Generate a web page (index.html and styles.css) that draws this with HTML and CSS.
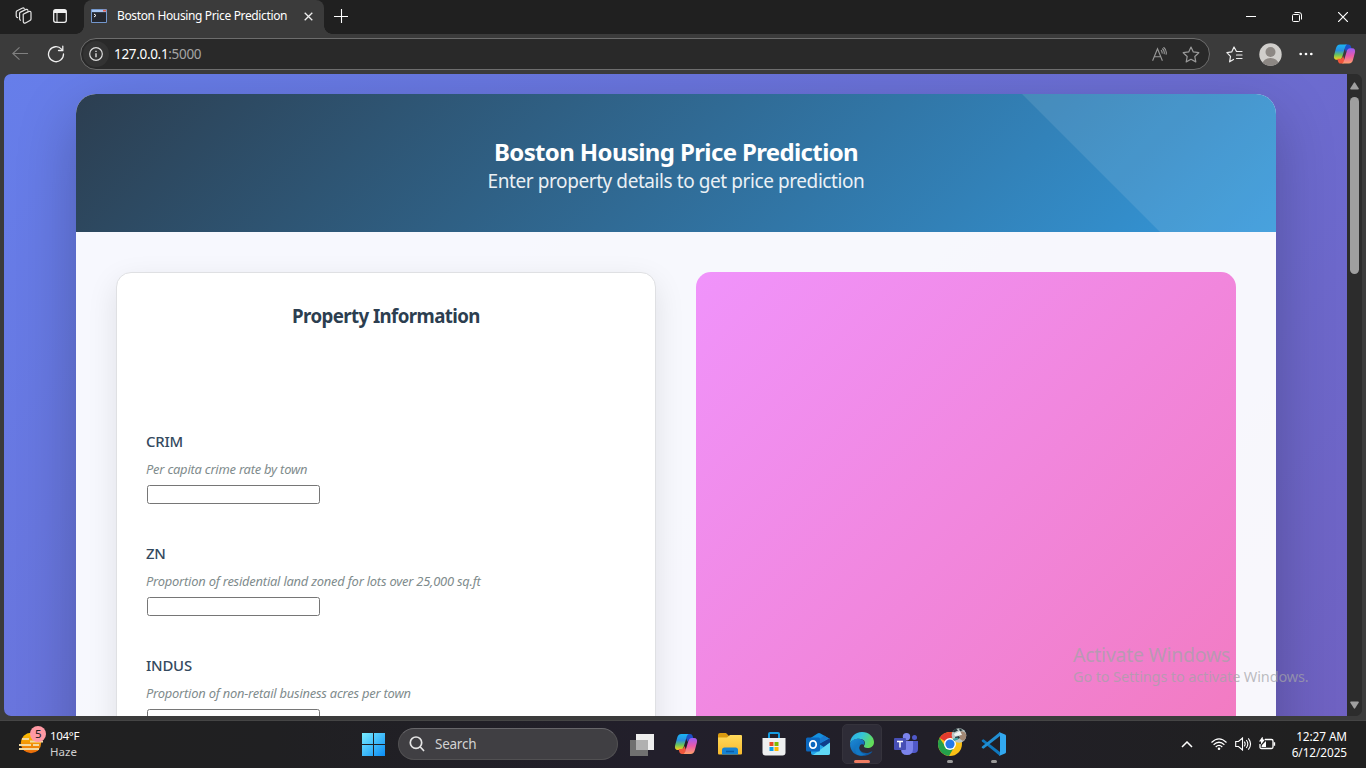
FILE: index.html
```html
<!DOCTYPE html>
<html lang="en">
<head>
<meta charset="utf-8">
<title>Boston Housing Price Prediction</title>
<link rel="stylesheet" href="styles.css">
</head>
<body>
<svg class="defs" width="0" height="0" aria-hidden="true">
  <defs>
    <linearGradient id="cpA" x1="0" y1="0" x2="0" y2="1"><stop offset="0" stop-color="#18b5f5"/><stop offset=".4" stop-color="#2b8fe0"/><stop offset=".68" stop-color="#6ac45a"/><stop offset="1" stop-color="#ffd21c"/></linearGradient>
    <linearGradient id="cpB" x1="0" y1="0" x2="0" y2="1"><stop offset="0" stop-color="#9a5cf5"/><stop offset=".5" stop-color="#ea5aa8"/><stop offset="1" stop-color="#ffa06a"/></linearGradient>
    <linearGradient id="win" gradientUnits="userSpaceOnUse" x1="0" y1="0" x2="24" y2="24"><stop offset="0" stop-color="#7df0ff"/><stop offset="1" stop-color="#0a8cf5"/></linearGradient>
    <linearGradient id="sun" x1="0" y1="0" x2="0" y2="1"><stop offset="0" stop-color="#ffc400"/><stop offset="1" stop-color="#e8690b"/></linearGradient>
    <linearGradient id="edgeA" x1="0" y1="0" x2="1" y2=".4"><stop offset="0" stop-color="#2aa7e8"/><stop offset=".5" stop-color="#35c6d8"/><stop offset="1" stop-color="#62dc5a"/></linearGradient>
    <linearGradient id="edgeB" x1="0" y1="0" x2="1" y2="1"><stop offset="0" stop-color="#1b8bd8"/><stop offset="1" stop-color="#0b4f98"/></linearGradient>
    <linearGradient id="folder" x1="0" y1="0" x2="0" y2="1"><stop offset="0" stop-color="#ffda5c"/><stop offset="1" stop-color="#f7b92d"/></linearGradient>
    <symbol id="copilot" viewBox="0 0 24 24">
      <path fill="#1c50c8" d="M13 2h3c1.500 0 2.300.9 2.700 2.200L19.500 7H17c-2 0-2.900 1-3.500 3L12 6z"/>
      <path fill="url(#cpA)" d="M7.500 2H15c-1.300.3-1.900 1.300-2.300 2.800l-2.800 9.400C9.300 16.600 8.300 18 6 18H4c-2.700 0-3.500-2-2.900-4.500l2-7.500C3.800 3.400 5 2 7.500 2z"/>
      <path fill="#f0563c" d="M11 22H8c-1.500 0-2.300-.9-2.700-2.200L4.500 17H7c2 0 2.900-1 3.500-3l1.500 4z"/>
      <path fill="url(#cpB)" d="M16.500 22H9c1.300-.3 1.900-1.300 2.300-2.800l2.800-9.400C14.700 7.400 15.700 6 18 6h2c2.700 0 3.500 2 2.900 4.500l-2 7.500c-.7 2.600-1.900 4-4.400 4z"/>
    </symbol>
  </defs>
</svg>
<div class="screen">
  <div class="tabbar">
    <svg class="ws" width="20" height="20" viewBox="0 0 20 20" fill="none" stroke="#e6e6e6" stroke-width="1.200" stroke-linejoin="round" stroke-linecap="round"><path d="M9.200 8.200 15 5.500q2-.6 2 1.200v6.200q0 1-1 1.500l-4.500 2.500q-2 .8-2.200-1.200zM9.200 8.200l5-2.700M6.500 14.200q-.9-.3-.9-1.500V7.600q0-1 .9-1.500l5.500-2.700q1.300-.5 1.900.8M3.600 11.700q-1.400-.3-1.400-1.700V6.300q0-1 .9-1.500l5-2.600q1.600-.6 2.100.4"/></svg>
    <svg class="tabs" width="16" height="16" viewBox="0 0 16 16" fill="none" stroke="#f0f0f0" stroke-width="1.300"><rect x="1.700" y="1.700" width="12.600" height="12.600" rx="2"/><path d="M2 3.500h12" stroke-width="3"/><path d="M5 5v9" stroke-width="1"/></svg>
    <div class="tab">
      <svg width="16" height="14" viewBox="0 0 16 14"><rect width="16" height="14" rx="1" fill="#7397cd"/><path fill="#a9c6f0" d="M1 1h14v2H1z"/><path fill="#e45a4a" d="M12 .8h3v1.600h-3z"/><path fill="#24272e" d="M1 3.200h14V13H1z"/><path d="m3 5 2 1.500L3 8" fill="none" stroke="#fff"/></svg>
      <span class="tab-title">Boston Housing Price Prediction</span>
      <svg class="close" width="9" height="9" viewBox="0 0 9 9" stroke="#eee" stroke-width="1.300"><path d="m.7.7 7.600 7.600M8.300.7.700 8.300"/></svg>
    </div>
    <svg class="plus" width="14" height="14" viewBox="0 0 14 14" stroke="#fff" stroke-width="1.100"><path d="M7.500 0v14M0 7.500h14"/></svg>
    <div class="winctl">
      <svg width="10" height="10" viewBox="0 0 10 10" stroke="#fff"><path d="M0 4.500h10"/></svg>
      <svg width="10" height="10" viewBox="0 0 10 10" fill="none" stroke="#fff"><rect x=".5" y="2.500" width="7" height="7" rx="1"/><path d="M2.500.5H7q2.500 0 2.500 2.500v4.500"/></svg>
      <svg width="10" height="10" viewBox="0 0 10 10" stroke="#fff" stroke-width="1.200"><path d="m0 0 10 10M10 0 0 10"/></svg>
    </div>
  </div>

  <div class="toolbar">
    <svg class="back" width="16" height="14" viewBox="0 0 16 14" fill="none" stroke="#808080" stroke-width="1.100"><path d="M16 6.500H.8M7.500.400.800 6.500l6.700 6.100"/></svg>
    <svg class="reload" width="18" height="18" viewBox="0 0 18 18" fill="none" stroke="#eee" stroke-width="1.300" stroke-linecap="round"><path d="M14.500 4.100A7.500 7.500 0 1 0 16.500 9M15.800 1.200v4.300h-4.300"/></svg>
    <div class="address">
      <span class="info"><svg width="14" height="14" viewBox="0 0 14 14" fill="none" stroke="#ddd" stroke-width="1.200"><circle cx="7" cy="7" r="6.300"/><path d="M7 6.300v4M7 3.700v1.300" stroke-width="1.400"/></svg></span>
      <span class="url">127.0.0.1<span class="port">:5000</span></span>
      <svg class="read" width="16" height="15" viewBox="0 0 16 15" fill="none" stroke="#999" stroke-width="1.100"><path d="M.6 13.800 5.500 1.800l4.900 12M2.200 9.700h6.600M9 3.100q1.500 1.400 1 3.400M10.300 1.500q2.600 2.200 1.800 5.600M11.500.2q3.800 2.900 2.500 7.500"/></svg>
      <svg class="star" width="18" height="17" viewBox="0 0 18 17" fill="none" stroke="#999" stroke-width="1.200" stroke-linejoin="round"><path d="m9 1 2.300 4.900 5.500.8-4 3.800 1 5.400L9 13.300l-4.800 2.600 1-5.400-4-3.800 5.500-.8z"/></svg>
    </div>
    <svg class="favs" width="17" height="17" viewBox="0 0 17 17" fill="none" stroke="#eee" stroke-width="1.200" stroke-linejoin="round" stroke-linecap="round"><path d="M16 5.500h-5.500L8 1 5.700 5.900.9 6.600l3.600 3.800-.9 5.400L7.500 13.500M10.500 9H16M10.500 12.500H16"/></svg>
    <svg class="avatar" width="23" height="23" viewBox="0 0 23 23"><defs><clipPath id="av"><circle cx="11.500" cy="11.500" r="11.200"/></clipPath></defs><g clip-path="url(#av)"><path fill="#d0cecb" d="M0 0h23v23H0z"/><circle cx="11.500" cy="9" r="5" fill="#8c8783"/><ellipse cx="11.500" cy="21" rx="8" ry="6" fill="#8c8783"/></g></svg>
    <svg class="dots" width="14" height="4" viewBox="0 0 14 4" fill="#fff"><circle cx="1.700" cy="2" r="1.350"/><circle cx="7" cy="2" r="1.350"/><circle cx="12.300" cy="2" r="1.350"/></svg>
    <svg class="cop" width="23" height="24"><use href="#copilot" width="23" height="24"/></svg>
  </div>

  <div class="viewport">
    <div class="page">
      <div class="container">
        <div class="header">
          <h1>Boston Housing Price Prediction</h1>
          <p>Enter property details to get price prediction</p>
        </div>
        <div class="columns">
          <div class="card">
            <h2>Property Information</h2>
            <div class="field"><label class="name">CRIM</label><span class="hint">Per capita crime rate by town</span><input class="box"></div>
            <div class="field"><label class="name">ZN</label><span class="hint">Proportion of residential land zoned for lots over 25,000 sq.ft</span><input class="box"></div>
            <div class="field"><label class="name">INDUS</label><span class="hint">Proportion of non-retail business acres per town</span><input class="box"></div>
          </div>
          <div class="result"></div>
        </div>
      </div>
    </div>
    <div class="scrollbar">
      <svg width="9" height="8" viewBox="0 0 9 8" fill="#9f9f9f"><path d="M3.700.9q.8-1.200 1.600 0l3.500 5.500Q9 7.500 8 7.500H1Q0 7.500.2 6.400z"/></svg>
      <div class="thumb"></div>
      <svg class="down" width="9" height="8" viewBox="0 0 9 8" fill="#9f9f9f"><path d="M3.700 7.100q.8 1.200 1.600 0l3.500-5.500Q9 .5 8 .5H1Q0 .5.200 1.600z"/></svg>
    </div>
  </div>

  <div class="taskbar">
    <div class="weather">
      <svg width="28" height="28" viewBox="0 0 28 28"><circle cx="13" cy="17" r="10.200" fill="url(#sun)"/><path d="M4 13h7M12 15.500h13M1 19h12M15 19h6M1 23h20" stroke="#f3d9a0" stroke-width="2"/><circle cx="20" cy="8" r="8" fill="#ff99a4"/><text x="20.300" y="12.200" text-anchor="middle" class="badge">5</text></svg>
      <div class="wtext"><span class="temp">104°F</span><span class="haze">Haze</span></div>
    </div>
    <div class="apps">
      <div class="app"><svg width="24" height="24" viewBox="0 0 24 24" fill="url(#win)"><path d="M1 1h11v11H1zM13 1h11v11H13zM1 13h11v11H1zM13 13h11v11H13z"/></svg></div>
      <div class="search"><svg width="16" height="16" viewBox="0 0 16 16" fill="none" stroke="#e4e4e4" stroke-width="1.700" stroke-linecap="round"><circle cx="7" cy="6.700" r="5.700"/><path d="m11.300 11 3.300 3.500"/></svg><span>Search</span></div>
      <div class="app tv"><svg width="26" height="24" viewBox="0 0 26 24"><path fill="#eee" d="M7 2h18v16H7z"/><path fill="#707070" d="M1 8h18v16H1z"/><path fill="#b0b0b0" d="M7 8h12v10H7z"/></svg></div>
      <div class="app"><svg width="24" height="24"><use href="#copilot" width="24" height="24"/></svg></div>
      <div class="app"><svg width="26" height="24" viewBox="0 0 26 24"><path fill="#d99a10" d="M1 3q0-2 2-2h6l3 3v5H1z"/><path fill="url(#folder)" d="M1 5.500h9L13 3h11q1 0 1 1v17.500q0 1-1 1H2q-1 0-1-1z"/><path fill="#1683d3" d="M5 22.500V18q0-2.500 2.500-2.500h11Q21 15.500 21 18v4.500z"/><path stroke="#0a5ba5" stroke-width="1.500" d="M9 19.500h8"/></svg></div>
      <div class="app"><svg width="24" height="24" viewBox="0 0 24 24"><path d="M7 7V2q0-1 1-1h8q1 0 1 1v5" fill="none" stroke="#159be0" stroke-width="2"/><path fill="#eeeff0" d="M.5 6h23v14.500q0 3-3 3h-17q-3 0-3-3z"/><path fill="#e84a25" d="M7.500 10h4v4h-4z"/><path fill="#7fba00" d="M12.500 10h4v4h-4z"/><path fill="#0a9fe9" d="M7.500 15h4v4h-4z"/><path fill="#fbb900" d="M12.500 15h4v4h-4z"/></svg></div>
      <div class="app"><svg width="26" height="24" viewBox="0 0 26 24"><path fill="#1490df" d="M4 7 12.500 1.500q1.500-.9 3 0L25 7v5H4z"/><path fill="#0f3f8c" d="M14 12 25 6v6l-6 4z"/><path fill="#1a79d0" d="M6 6l8 6 9-6-4-2.500L12 9z"/><path fill="#22a5ea" d="M6 12h8l5 3 6-4v10q0 2-2 2H8q-2 0-2-2z"/><path fill="#5fd8f5" d="M8 23 25 10.500V21q0 2-2 2z"/><rect x="1" y="5.500" width="14" height="14" rx="1.500" fill="#0b67be"/><ellipse cx="8" cy="12.500" rx="3.200" ry="3.600" fill="none" stroke="#fff" stroke-width="1.800"/></svg></div>
      <div class="app active"><svg width="26" height="26" viewBox="0 0 26 26"><path fill="url(#edgeA)" d="M1 13C1 6 6 1 13 1s12 5 12 10c0 4-3 6-6.500 6-3 0-4-1-3.500-2.200 2.800-3.700-.5-7-5-7C6 7.800 2 10 1 13z"/><path fill="url(#edgeB)" d="M1 13c1-3.500 4.500-5.200 8.500-5.200 4.300 0 7 2.900 5.700 6.200-1.200-1.400-3.700-1-4.700 1.100-1.500 3.600 2.300 7.300 7 7 2 0 3.700-.8 5-1.600.6-.3 1 .1.600.6C21 24 17.500 25 13 25 6 25 1 20 1 13z"/><path fill="#1278c4" d="M10.500 15c-2 4.800 2.700 9 7 7.500-3 2.500-11 3.500-11.300-3.500-.1-3 2-5.700 4-7.300z"/></svg></div>
      <div class="app"><svg width="26" height="24" viewBox="0 0 26 24"><circle cx="13.500" cy="4.800" r="3.700" fill="#7b83eb"/><circle cx="21.500" cy="5.500" r="2.500" fill="#5059c9"/><path fill="#5059c9" d="M17 9h8v8q0 4-4 4h-4z"/><path fill="#7b83eb" d="M8 9h12v8q0 6-6 6t-6-6z"/><rect x="1" y="6" width="12" height="12" rx="1" fill="#474fb5"/><path fill="none" stroke="#fff" stroke-width="1.500" d="M4 9.500h6M7 9.500v6"/></svg></div>
      <div class="app run chrome"><svg width="30" height="30" viewBox="0 0 30 30"><circle cx="13" cy="17" r="12" fill="#fbc116"/><path fill="#e33b2e" d="M2.600 11A12 12 0 0 1 23.400 11H13v6z"/><path fill="#23a04b" d="M2.600 11A12 12 0 0 0 12 29l5.500-9.500L8 19z"/><circle cx="13" cy="17" r="6" fill="#fff"/><circle cx="13" cy="17" r="4.600" fill="#2678e8"/><circle cx="22" cy="8.500" r="7.300" fill="#b9c6c5"/><path fill="#a18673" d="M22 5q5-2 7 2 1 5-3 7l-3-2z"/><path fill="#26363a" d="m15.500 4 3.500-2.500 2 2-4 2zM22 1.500l4 1.500-3 1.500zM18 10l4-1 1 2-4 2z"/><path fill="#eef3f1" d="m17 7 6-3 2 4-7 1z"/><path fill="#3aa3a5" d="m15.500 12 5-1.500 1 1.500-4 2z"/></svg></div>
      <div class="app run vs"><svg width="26" height="26" viewBox="0 0 26 26"><path fill="#0f78be" d="M2.500 8.300 19 21v4L1 10.500q-.7-.7 0-1.400z"/><path fill="#218fd3" d="M2.500 17.700 19 5V1L1 15.500q-.7.700 0 1.400z"/><path fill="#32a8ef" d="m18 1 6 2.500q1 .4 1 1.500v16q0 1-1 1.500L18 25q1-.4 1-2V3q0-1.600-1-2z"/></svg></div>
    </div>
    <div class="tray">
      <svg class="chev" width="12" height="7" viewBox="0 0 12 7" fill="none" stroke="#fff" stroke-width="1.500"><path d="m1 6 5-5 5 5"/></svg>
      <svg class="wifi" width="16" height="13" viewBox="0 0 16 13" fill="none" stroke="#fff" stroke-width="1.200"><path d="M.5 4.500q7.500-7.200 15 0M2.600 6.800q5.400-5.100 10.800 0M4.700 9q3.300-3.100 6.600 0"/><circle cx="8" cy="10.800" r="1.300" fill="#fff" stroke="none"/></svg>
      <svg class="vol" width="17" height="14" viewBox="0 0 17 14" fill="none" stroke="#fff" stroke-width="1.100"><path d="M.7 4.500h2.800L7.500 1v12L3.500 9.500H.7zM9.300 4.700q1.700 2.300 0 4.600M11.300 3q3 4 0 8M13.300 1.300q4.500 5.700 0 11.400"/></svg>
      <svg class="bat" width="17" height="14" viewBox="0 0 17 14"><path d="M6 2.500h6.500q1.500 0 1.500 1.500v6q0 1.500-1.500 1.500h-10Q1 11.500 1 10V7M15.500 5.300v3.400" fill="none" stroke="#fff" stroke-width="1.300"/><path fill="#fff" d="M3.500-.5 0 4.500h2v3l4-5H4zM2.500 10l.5-2 4-4v6z"/></svg>
      <div class="clock"><span class="time">12:27 AM</span><span class="date">6/12/2025</span></div>
    </div>
  </div>

  <div class="watermark"><div class="wm1">Activate Windows</div><div class="wm2">Go to Settings to activate Windows.</div></div>
</div>
</body>
</html>
```

FILE: styles.css
```css
* { box-sizing: border-box; margin: 0; padding: 0; }
body { width: 1366px; height: 768px; overflow: hidden; font-family: "Noto Sans", "Open Sans", sans-serif; }
svg { display: block; flex: none; }
.defs { position: absolute; }
.screen { position: relative; width: 1366px; height: 768px; display: flex; flex-direction: column; background: #3b3b3b; overflow: hidden; white-space: nowrap; }

/* tab strip */
.tabbar { height: 34px; background: #202020; display: flex; align-items: center; flex: none; }
.ws { margin-left: 14px; margin-top: -3px; }
.tabs { margin-left: 18px; margin-top: -2px; }
.tab { position: relative; width: 240px; height: 34px; margin-left: 16px; padding: 0 10px 2px 7px; background: #3b3b3b; border-radius: 8px 8px 0 0; display: flex; align-items: center; }
.tab::before, .tab::after { content: ""; position: absolute; bottom: 0; width: 8px; height: 8px; }
.tab::before { left: -8px; background: radial-gradient(circle at 0 0, #202020 7.500px, #3b3b3b 8px); }
.tab::after { right: -8px; background: radial-gradient(circle at 100% 0, #202020 7.500px, #3b3b3b 8px); }
.tab-title { width: 178px; margin-left: 10px; padding-bottom: 1px; font-size: 12px; letter-spacing: -.36px; color: #fff; }
.close { margin-left: 9px; }
.plus { margin-left: 10px; margin-top: -3px; }
.winctl { margin-left: auto; display: flex; gap: 36px; padding-right: 18px; }

/* toolbar */
.toolbar { height: 40px; display: flex; align-items: center; flex: none; background: #3b3b3b; }
.back { margin-left: 12px; }
.reload { margin-left: 19px; }
.address { width: 1130px; height: 32px; margin-left: 15px; padding: 0 9px 0 2px; border: 1px solid #6d6d6d; border-radius: 16px; background: #292929; display: flex; align-items: center; }
.info { width: 26px; height: 26px; border-radius: 50%; background: #333; display: flex; align-items: center; justify-content: center; }
.url { margin-left: 5px; font-size: 13.500px; letter-spacing: -.32px; color: #fff; }
.port { color: #a5a5a5; }
.read { margin-left: auto; }
.star { margin-left: 14px; }
.favs { margin-left: 16px; }
.avatar { margin-left: 16px; }
.dots { margin-left: 17px; }
.cop { margin-left: 20px; }

/* page viewport */
.viewport { height: 642px; margin: 0 4px; border-radius: 7px; overflow: hidden; display: flex; flex: none; background: #2c2c2c; }
.page { width: 1343px; height: 2200px; padding: 20px 71px 20px 72px; background: linear-gradient(135deg, #667eea 0%, #764ba2 100%); flex: none; }
.container { width: 1200px; height: 2160px; border-radius: 20px; overflow: hidden; background: rgba(255,255,255,.95); box-shadow: 0 20px 60px rgba(0,0,0,.24); }
.header { position: relative; height: 138px; padding-top: 40px; background: linear-gradient(135deg, #2c3e50, #3498db); text-align: center; color: #fff; }
.header::after { content: ""; position: absolute; inset: 0; background: rgba(255,255,255,.1); clip-path: polygon(946px 0, 100% 0, 100% 100%, 1084px 100%); }
.header h1 { font-size: 24px; line-height: 35px; font-weight: 700; letter-spacing: -.63px; }
.header p { font-size: 19px; line-height: 24px; letter-spacing: -.42px; opacity: .9; }
.columns { display: grid; grid-template-columns: 1fr 1fr; gap: 40px; padding: 40px; height: 2022px; }
.card { padding: 28px 29px; border: 1px solid #dfe0e3; border-radius: 15px; background: #fff; box-shadow: 0 10px 30px rgba(0,0,0,.1); }
.card h2 { height: 131px; font-size: 18.700px; line-height: 30px; font-weight: 700; letter-spacing: -.6px; color: #2c3e50; text-align: center; }
.field { height: 112px; display: flex; flex-direction: column; align-items: flex-start; }
.name { height: 27px; line-height: 19px; font-size: 14.900px; font-weight: 500; letter-spacing: -.2px; color: #34495e; }
.hint { height: 26px; line-height: 20px; font-size: 12.900px; font-style: italic; letter-spacing: -.21px; color: #7f8c8d; }
.box { width: 173px; height: 19px; margin-left: 1px; border: 1px solid #767676; border-radius: 2.500px; background: #fff; }
.result { border-radius: 15px; background: linear-gradient(135deg, #f093fb 0%, #f5576c 100%); }
.scrollbar { width: 15px; display: flex; flex-direction: column; align-items: center; padding: 8px 0 7px; background: #2c2c2c; }
.thumb { width: 9px; height: 177px; margin-top: 7px; border-radius: 5px; background: #9f9f9f; }
.down { margin-top: auto; }

/* taskbar */
.taskbar { height: 48px; margin-top: 4px; border-top: 1px solid #454545; background: linear-gradient(90deg, #202020 0, #202022 20%, #221f2b 48%, #211f28 68%, #202020 95%); display: flex; flex: none; color: #fff; }
.weather { width: 351px; display: flex; padding: 5px 0 0 18px; }
.badge { font-size: 11.500px; fill: #202020; }
.wtext { margin-left: 4px; display: flex; flex-direction: column; font-size: 11.500px; line-height: 16px; letter-spacing: -.3px; padding-top: 2px; }
.haze { color: #cfcfcf; letter-spacing: 0; }
.apps { display: flex; align-items: center; height: 46px; }
.app { position: relative; width: 44px; height: 40px; display: flex; align-items: center; justify-content: center; }
.search { width: 220px; height: 32px; margin: 0 2px 0 3px; padding-left: 10px; border: 1px solid #515052; border-top-color: #67666a; border-radius: 16px; background: #403f43; display: flex; align-items: center; gap: 10px; font-size: 13.500px; letter-spacing: -.25px; color: #d2d2d2; }
.active { width: 40px; margin: 0 2px; border: 1px solid #35333c; border-radius: 5px; background: #2e2c37; }
.active::after, .run::after { content: ""; position: absolute; bottom: 1px; width: 6px; height: 3px; border-radius: 2px; background: #9a9a9a; }
.active::after { width: 16px; bottom: 0; background: #ee7c62; }
.chrome svg { margin: -5px 0 0 4px; }
.tray { margin-left: auto; display: flex; align-items: center; height: 46px; padding-right: 19px; }
.wifi { margin-left: 18px; }
.vol { margin-left: 8px; }
.bat { margin-left: 7px; }
.clock { width: 71px; padding-bottom: 1px; display: flex; flex-direction: column; align-items: flex-end; font-size: 11.800px; line-height: 16px; letter-spacing: -.08px; }

/* watermark over everything */
.watermark { position: absolute; left: 1073px; top: 642px; color: rgba(163,163,168,.72); }
.wm1 { font-size: 19.500px; line-height: 26px; letter-spacing: -.25px; }
.wm2 { font-size: 14.500px; line-height: 17px; letter-spacing: -.13px; }
```
